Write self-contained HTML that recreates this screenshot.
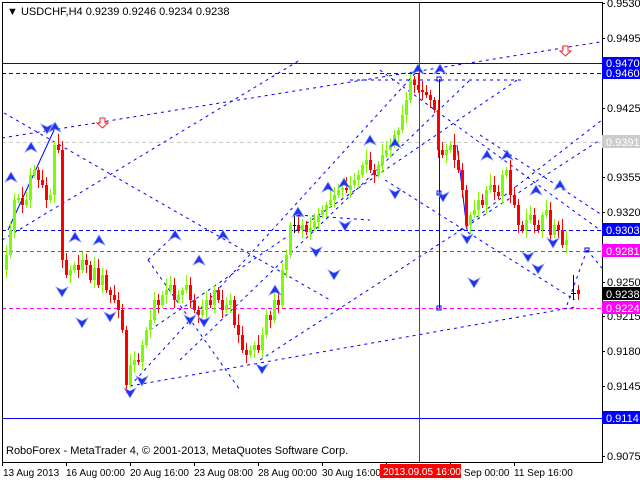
<!DOCTYPE html>
<html><head><meta charset="utf-8">
<style>
html,body{margin:0;padding:0;background:#fff;width:640px;height:480px;overflow:hidden}
svg{display:block;font-family:"Liberation Sans",sans-serif;font-size:10px}
</style></head><body>
<svg id="s" width="640" height="480" xmlns="http://www.w3.org/2000/svg" shape-rendering="crispEdges">
<rect width="640" height="480" fill="#fff"/>
<g fill="none" stroke-width="1">
<line x1="2" y1="63.5" x2="602" y2="63.5" stroke="#0000ff"/>
<line x1="2" y1="418.5" x2="602" y2="418.5" stroke="#0000ff"/>
<line x1="2" y1="73.5" x2="602" y2="73.5" stroke="#0000ff" stroke-dasharray="4,3"/>
<line x1="2" y1="230.5" x2="602" y2="230.5" stroke="#0000ff" stroke-dasharray="4,3"/>
<line x1="2" y1="142.5" x2="602" y2="142.5" stroke="#cccccc" stroke-dasharray="4,3"/>
<line x1="2" y1="251.5" x2="602" y2="251.5" stroke="#ff00ff" stroke-dasharray="4,3"/>
<line x1="2" y1="308.5" x2="602" y2="308.5" stroke="#ff00ff" stroke-dasharray="4,3"/>
<g stroke="#0000ff" stroke-dasharray="3,4" shape-rendering="auto">
<line x1="2" y1="138" x2="600" y2="42"/>
<line x1="4" y1="113" x2="330" y2="300"/>
<line x1="130" y1="386" x2="420" y2="68"/>
<line x1="150" y1="330" x2="520" y2="78"/>
<line x1="180" y1="360" x2="470" y2="80"/>
<line x1="2" y1="240" x2="300" y2="60"/>
<line x1="130" y1="386" x2="575" y2="307"/>
<line x1="260" y1="360" x2="600" y2="140"/>
<line x1="385" y1="180" x2="575" y2="300"/>
<line x1="480" y1="135" x2="602" y2="215"/>
<line x1="460" y1="230" x2="602" y2="120"/>
<line x1="148" y1="260" x2="180" y2="230"/>
<line x1="148" y1="260" x2="240" y2="390"/>
<line x1="350" y1="80" x2="525" y2="80"/>
<line x1="298" y1="215" x2="370" y2="220"/>
<line x1="567" y1="305" x2="587" y2="250"/>
<line x1="587" y1="250" x2="602" y2="268"/>
<line x1="380" y1="70" x2="600" y2="230"/>
</g>
<line x1="439.5" y1="79" x2="439.5" y2="308" stroke="#0000ff"/>
<line x1="457" y1="145" x2="467" y2="230" stroke="#0000ff" shape-rendering="auto"/>
<line x1="8" y1="230" x2="55" y2="128" stroke="#0000ff" shape-rendering="auto"/>
<rect x="437" y="77" width="4" height="4" stroke="#0000ff"/>
<rect x="437" y="191" width="4" height="4" stroke="#0000ff"/>
<rect x="437" y="306" width="4" height="4" stroke="#0000ff"/>
<rect x="585" y="248" width="4" height="4" stroke="#0000ff"/>
<rect x="297" y="212" width="4" height="4" stroke="#0000ff"/>
</g>
<g id="candles"></g>
<g fill="#2233ee" stroke="#8899ff" stroke-width="0.7" shape-rendering="auto">
<path d="M11,172 l6,10 l-6,-3 l-6,3z"/>
<path d="M31,142 l6,10 l-6,-3 l-6,3z"/>
<path d="M55,122 l6,10 l-6,-3 l-6,3z"/>
<path d="M75,232 l6,10 l-6,-3 l-6,3z"/>
<path d="M99,235 l6,10 l-6,-3 l-6,3z"/>
<path d="M175,230 l6,10 l-6,-3 l-6,3z"/>
<path d="M199,255 l6,10 l-6,-3 l-6,3z"/>
<path d="M223,230 l6,10 l-6,-3 l-6,3z"/>
<path d="M275,285 l6,10 l-6,-3 l-6,3z"/>
<path d="M298,207 l6,10 l-6,-3 l-6,3z"/>
<path d="M328,182 l6,10 l-6,-3 l-6,3z"/>
<path d="M344,178 l6,10 l-6,-3 l-6,3z"/>
<path d="M370,135 l6,10 l-6,-3 l-6,3z"/>
<path d="M395,138 l6,10 l-6,-3 l-6,3z"/>
<path d="M418,64 l6,10 l-6,-3 l-6,3z"/>
<path d="M440,64 l6,10 l-6,-3 l-6,3z"/>
<path d="M487,150 l6,10 l-6,-3 l-6,3z"/>
<path d="M507,150 l6,10 l-6,-3 l-6,3z"/>
<path d="M536,185 l6,10 l-6,-3 l-6,3z"/>
<path d="M560,180 l6,10 l-6,-3 l-6,3z"/>
<path d="M47,134 l6,-10 l-6,3 l-6,-3z"/>
<path d="M62,297 l6,-10 l-6,3 l-6,-3z"/>
<path d="M82,328 l6,-10 l-6,3 l-6,-3z"/>
<path d="M110,322 l6,-10 l-6,3 l-6,-3z"/>
<path d="M130,398 l6,-10 l-6,3 l-6,-3z"/>
<path d="M142,386 l6,-10 l-6,3 l-6,-3z"/>
<path d="M190,325 l6,-10 l-6,3 l-6,-3z"/>
<path d="M204,327 l6,-10 l-6,3 l-6,-3z"/>
<path d="M262,374 l6,-10 l-6,3 l-6,-3z"/>
<path d="M316,257 l6,-10 l-6,3 l-6,-3z"/>
<path d="M334,280 l6,-10 l-6,3 l-6,-3z"/>
<path d="M345,231 l6,-10 l-6,3 l-6,-3z"/>
<path d="M395,199 l6,-10 l-6,3 l-6,-3z"/>
<path d="M443,202 l6,-10 l-6,3 l-6,-3z"/>
<path d="M467,244 l6,-10 l-6,3 l-6,-3z"/>
<path d="M474,288 l6,-10 l-6,3 l-6,-3z"/>
<path d="M528,262 l6,-10 l-6,3 l-6,-3z"/>
<path d="M538,274 l6,-10 l-6,3 l-6,-3z"/>
<path d="M553,248 l6,-10 l-6,3 l-6,-3z"/>
</g>
<line x1="419.5" y1="2" x2="419.5" y2="462" stroke="#ff0000"/>
<path d="M100,118 h5 v5 h3 l-5.5,5 l-5.5,-5 h3z" fill="#fff" stroke="#ff2222" shape-rendering="auto"/>
<path d="M563,46 h5 v5 h3 l-5.5,5 l-5.5,-5 h3z" fill="#fff" stroke="#ff2222" shape-rendering="auto"/>
<line x1="573.5" y1="275" x2="573.5" y2="300" stroke="#000"/>
<line x1="571" y1="293.5" x2="576" y2="293.5" stroke="#000"/>
<line x1="578.5" y1="285" x2="578.5" y2="300" stroke="#ff0000"/>
<rect x="577" y="290" width="3" height="4" fill="#ff0000"/>
<rect x="2.5" y="2.5" width="600" height="460" fill="none" stroke="#000"/>
<text x="7" y="15" fill="#000" font-size="11">▼ USDCHF,H4  0.9239 0.9246 0.9234 0.9238</text>
<text x="6" y="454" fill="#000" font-size="11">RoboForex - MetaTrader 4, © 2001-2013, MetaQuotes Software Corp.</text>
<g fill="#000" font-size="11">
<text x="607" y="7">0.9530</text>
<text x="607" y="42">0.9495</text>
<text x="607" y="112">0.9425</text>
<text x="607" y="181">0.9355</text>
<text x="607" y="216">0.9320</text>
<text x="607" y="286">0.9250</text>
<text x="607" y="320">0.9215</text>
<text x="607" y="355">0.9180</text>
<text x="607" y="390">0.9145</text>
<text x="607" y="460">0.9075</text>
</g>
<g stroke="#000">
<line x1="602" y1="3.5" x2="605" y2="3.5"/><line x1="602" y1="38.5" x2="605" y2="38.5"/><line x1="602" y1="108.5" x2="605" y2="108.5"/><line x1="602" y1="177.5" x2="605" y2="177.5"/><line x1="602" y1="212.5" x2="605" y2="212.5"/><line x1="602" y1="282.5" x2="605" y2="282.5"/><line x1="602" y1="316.5" x2="605" y2="316.5"/><line x1="602" y1="351.5" x2="605" y2="351.5"/><line x1="602" y1="386.5" x2="605" y2="386.5"/><line x1="602" y1="456.5" x2="605" y2="456.5"/>
</g>
<g font-size="11">
<rect x="602" y="57" width="38" height="12" fill="#0000ff"/><text x="606" y="67" fill="#fff">0.9470</text>
<rect x="602" y="67" width="38" height="12" fill="#0000ff"/><text x="606" y="77" fill="#fff">0.9460</text>
<rect x="602" y="135" width="38" height="13" fill="#cccccc"/><text x="606" y="146" fill="#fff">0.9391</text>
<rect x="602" y="223" width="38" height="13" fill="#0000ff"/><text x="606" y="234" fill="#fff">0.9303</text>
<rect x="602" y="244" width="38" height="13" fill="#ff00ff"/><text x="606" y="255" fill="#fff">0.9281</text>
<rect x="602" y="287" width="38" height="13" fill="#000"/><text x="606" y="298" fill="#fff">0.9238</text>
<rect x="602" y="301" width="38" height="13" fill="#ff00ff"/><text x="606" y="312" fill="#fff">0.9224</text>
<rect x="602" y="411" width="38" height="13" fill="#0000ff"/><text x="606" y="422" fill="#fff">0.9114</text>
</g>
<g stroke="#000">
<line x1="2.5" y1="462" x2="2.5" y2="466"/><line x1="66.5" y1="462" x2="66.5" y2="466"/><line x1="130.5" y1="462" x2="130.5" y2="466"/><line x1="194.5" y1="462" x2="194.5" y2="466"/><line x1="258.5" y1="462" x2="258.5" y2="466"/><line x1="322.5" y1="462" x2="322.5" y2="466"/><line x1="386.5" y1="462" x2="386.5" y2="466"/><line x1="450.5" y1="462" x2="450.5" y2="466"/><line x1="514.5" y1="462" x2="514.5" y2="466"/>
</g>
<g fill="#000">
<text x="3" y="476">13 Aug 2013</text>
<text x="66" y="476">16 Aug 00:00</text>
<text x="130" y="476">20 Aug 16:00</text>
<text x="194" y="476">23 Aug 08:00</text>
<text x="258" y="476">28 Aug 00:00</text>
<text x="322" y="476">30 Aug 16:00</text>
<text x="450" y="476">06 Sep 00:00</text>
<text x="514" y="476">11 Sep 16:00</text>
</g>
<rect x="380" y="464" width="81" height="14" fill="#ff0000"/>
<text x="383" y="475" fill="#fff">2013.09.05 16:00</text>
</svg>
<script>
(function(){
var ns="http://www.w3.org/2000/svg";
var c=[270,255,230,200,198,205,200,175,170,180,185,200,195,145,150,260,275,270,265,270,260,265,280,268,285,275,290,295,300,310,330,385,365,360,362,345,330,320,300,305,295,290,285,300,295,290,285,300,310,315,310,300,305,290,300,310,305,300,325,335,350,355,350,345,350,335,315,320,300,305,270,255,225,225,230,225,232,228,222,215,210,205,200,195,190,188,190,185,180,175,165,160,170,175,165,155,150,145,135,130,115,100,80,85,90,92,95,100,110,150,155,150,145,160,170,190,225,215,210,200,205,190,185,192,196,175,170,195,205,225,230,220,215,225,230,215,210,235,225,230,245,240];
var g=document.getElementById('candles');
function mk(t,attrs){var e=document.createElementNS(ns,t);for(var k in attrs){e.setAttribute(k,String(attrs[k]));}g.appendChild(e);return e;}
var x=6;
for(var i=1;i<c.length;i++){
 var o=c[i-1],cl=c[i];var col=cl<o?'#7cfc00':'#ff0000';
 if(Math.abs(cl-o)<1){col='#000';}
 var top=Math.min(o,cl),bot=Math.max(o,cl);
 var hi=top-3-((i*7)%9),lo=bot+3+((i*5)%10);
 mk('line',{x1:x+0.5,y1:hi,x2:x+0.5,y2:lo,stroke:col});
 if(bot-top<1){mk('line',{x1:x-1,y1:top+0.5,x2:x+2,y2:top+0.5,stroke:col});}
 else mk('rect',{x:x-1,y:top,width:3,height:bot-top,fill:col});
 x+=4;
}
})();
</script>
</body></html>
